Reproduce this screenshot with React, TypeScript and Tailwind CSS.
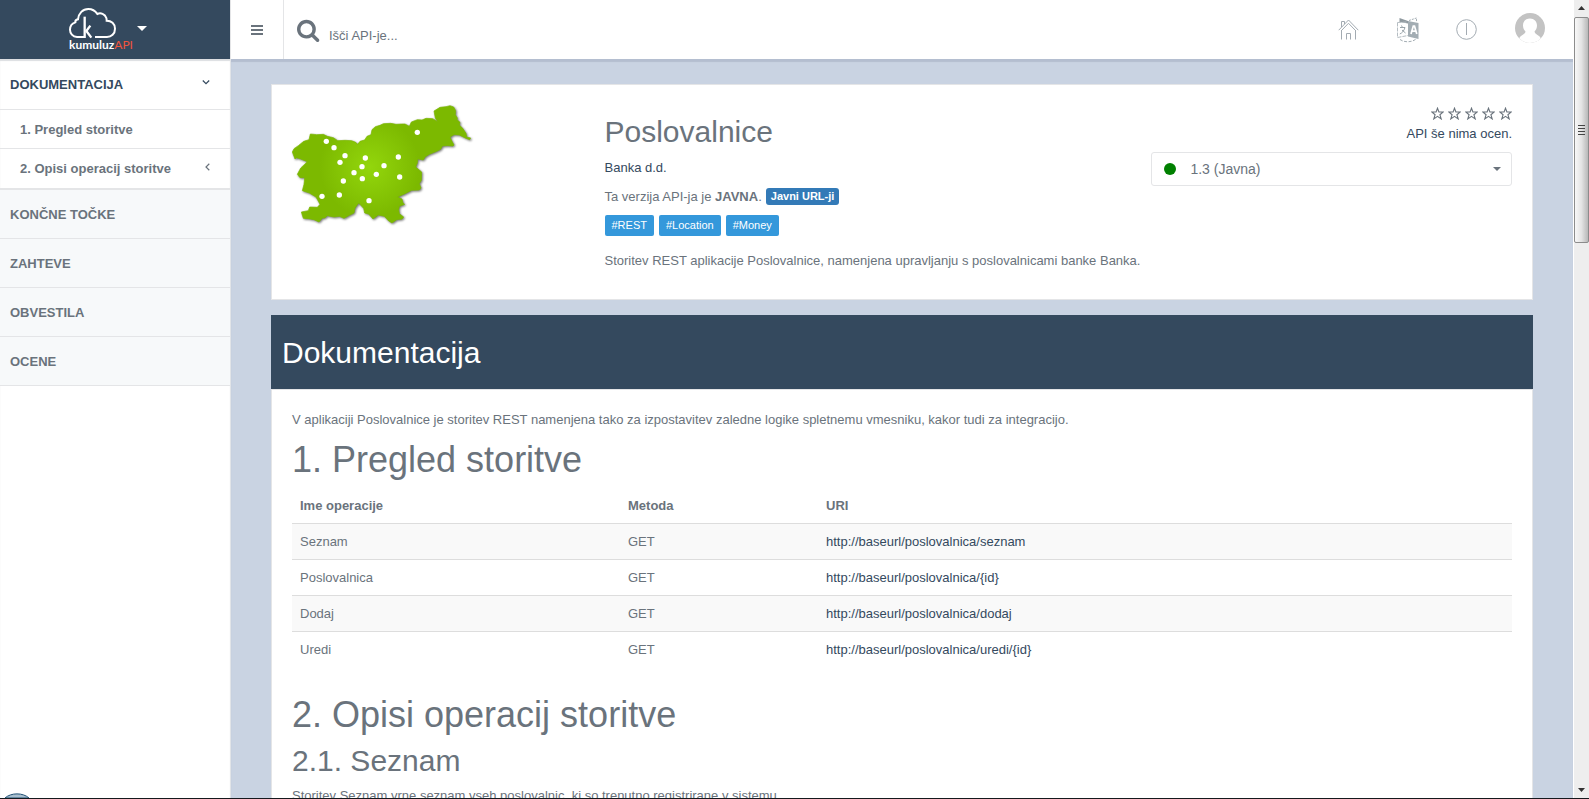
import React from "react";

const operations = [
  { name: "Seznam", method: "GET", uri: "http://baseurl/poslovalnica/seznam" },
  { name: "Poslovalnica", method: "GET", uri: "http://baseurl/poslovalnica/{id}" },
  { name: "Dodaj", method: "GET", uri: "http://baseurl/poslovalnica/dodaj" },
  { name: "Uredi", method: "GET", uri: "http://baseurl/poslovalnica/uredi/{id}" },
];

const sections = ["KONČNE TOČKE", "ZAHTEVE", "OBVESTILA", "OCENE"];
const tags = ["#REST", "#Location", "#Money"];

const branches = [
  [169, 183], [192, 202], [225, 226], [210, 246], [286, 233], [276, 259], [252, 277], [277, 295], [319, 282],
  [342, 256], [385, 230], [389, 290], [220, 302], [208, 344], [156, 348], [297, 361], [442, 156],
];

function Logo() {
  return (
    <span className="flex flex-col">
      <svg className="h-[31px] w-[47px]" viewBox="0 0 141 93" fill="none" stroke="#fff" strokeWidth="6">
        <path d="M47 87H24C11 86 3 76 3 65c0-12 7-19 16-22-1-5 3-8 8-9 2-18 14-31 31-31 12 0 21 6 27 15 10-5 23 0 27 12 1 3 1 5 1 8 14 0 25 9 25 24 0 16-11 25-24 25H78" />
        <path d="M47 26v64" strokeWidth="7" />
        <path d="M64 53 52 69l15 20" strokeWidth="7" />
      </svg>
      <span className="font-[Lato,sans-serif] text-xs leading-3 font-bold text-white">
        kumuluz<span className="font-normal text-[#f0543c]">API</span>
      </span>
    </span>
  );
}

function SloveniaMap() {
  return (
    <svg className="h-[120px] w-[180px] drop-shadow-[1px_1px_1px_rgba(0,0,0,0.55)]" viewBox="66 74 540 360" role="img" aria-label="Slovenija">
      <defs>
        <radialGradient id="land" gradientUnits="userSpaceOnUse" cx="300" cy="260" r="150">
          <stop offset="0" stopColor="#93d60c" />
          <stop offset="1" stopColor="#7cb900" />
        </radialGradient>
      </defs>
      <polygon
        fill="url(#land)"
        stroke="#7cb900"
        strokeWidth="2"
        strokeLinejoin="round"
        points="121,161 140,163 160,162 172,168 190,172 203,181 225,180 245,181 257,186 263,192 270,183 284,179 291,168 303,163 306,148 316,139 330,135 340,130 362,129 378,132 395,131 405,131 418,138 424,125 442,118 456,119 468,114 488,115 503,124 496,113 492,92 510,81 528,79 540,76 551,80 557,91 556,103 562,113 561,118 570,126 568,134 578,144 588,159 590,170 602,173 599,178 588,174 568,164 552,163 540,170 546,183 552,194 549,197 532,196 517,197 512,207 500,213 478,222 466,229 460,239 443,236 442,248 437,260 455,275 454,300 448,310 453,323 448,329 425,330 405,340 383,350 396,356 399,368 404,372 388,378 386,388 388,400 401,410 396,416 380,418 366,428 355,421 343,408 325,404 309,416 296,401 284,398 281,384 266,368 255,383 252,398 238,405 222,414 208,408 192,410 172,406 164,413 157,413 147,425 132,418 116,415 100,414 94,395 115,391 119,380 142,381 150,372 138,350 118,338 97,331 102,312 104,292 90,292 82,282 92,263 112,244 92,236 80,232 75,236 67,215 72,205 85,196 101,183 117,178"
      />
      {branches.map(([x, y]) => (
        <circle key={x + "-" + y} cx={x} cy={y} r="8" fill="#fff" />
      ))}
    </svg>
  );
}

function SearchIcon() {
  return (
    <svg className="size-6" viewBox="0 0 1792 1792" fill="#6a737c">
      <path d="M1152 832q0-185-131.5-316.5t-316.5-131.5-316.5 131.5-131.5 316.5 131.5 316.5 316.5 131.5 316.5-131.5 131.5-316.5zm512 832q0 52-38 90t-90 38q-54 0-90-38l-343-342q-179 124-399 124-143 0-273.5-55.5t-225-150-150-225-55.5-273.5 55.5-273.5 150-225 225-150 273.5-55.5 273.5 55.5 225 150 150 225 55.5 273.5q0 220-124 399l343 343q37 37 37 90z" />
    </svg>
  );
}

function HomeIcon() {
  return (
    <svg className="h-[21px] w-[21px]" viewBox="0 0 21 21" fill="none" stroke="#a3abb2">
      <path d="M.7 11.2 10.500 1l9.800 10.200M3.500 11.500 10.500 4.300l7 7.200M3.500 11v9.500M17.500 11v9.500M8.500 20.500v-6h4v6M3.500 8V2.500h3v2.600" />
    </svg>
  );
}

function TranslateIcon() {
  return (
    <svg className="h-[26px] w-[22px]" viewBox="0 0 22 26">
      <path d="M2.500 1 11 4v2.500L2.500 5z" fill="#8f999f" />
      <path d="M11 4l10.500 2v16L11 19.500z" fill="#a3adb3" />
      <path d="M12 3.500 19.500 1v4" fill="none" stroke="#a3adb3" strokeDasharray="2 1" />
      <path d="M.5 5.500v15L11 18.500M.5 5.500l10-.5" fill="none" stroke="#b5bdc2" strokeDasharray="4 1" />
      <path d="M3 10.500h5C7 14 5 16 2.800 17M4.500 8.500l1 2M5 13l3.500 3" fill="none" stroke="#9aa4aa" />
      <path d="M14 17l2.300-8h1.200l2.300 8M14.800 14.200h4.200" fill="none" stroke="#fff" strokeWidth="1.700" />
      <path d="M3 22.500c4 3 11 3 15.500 0" fill="none" stroke="#a3adb3" strokeDasharray="3 1.500" />
    </svg>
  );
}

function PowerIcon() {
  return (
    <svg className="h-[21px] w-[21px]" viewBox="0 0 21 21" fill="none" stroke="#a3abb2">
      <circle cx="10.500" cy="10.500" r="9.800" />
      <path d="M10.500 4v12" />
    </svg>
  );
}

function Avatar() {
  return (
    <svg className="size-[30px]" viewBox="0 0 30 30">
      <clipPath id="round">
        <circle cx="15" cy="15" r="15" />
      </clipPath>
      <g clipPath="url(#round)">
        <path fill="#c3c3c3" d="M0 0h30v30H0z" />
        <path fill="#fff" d="M15 5.500c4.200 0 7 3 7 7 0 2.500-1 4.500-2.500 6 .3 2.500 2.500 2.800 4.500 4.500 1.500 1.400 2.500 3 2.500 7h-23c0-4 1-5.600 2.500-7 2-1.700 4.200-2 4.500-4.500-1.500-1.500-2.500-3.500-2.500-6 0-4 2.800-7 7-7z" />
      </g>
    </svg>
  );
}

function Star() {
  return (
    <svg className="size-[13px]" viewBox="0 0 13 13" fill="none" stroke="#6a737c" strokeWidth="1.100">
      <path d="M6.500 1.200 7.900 5h4.300L8.900 7.700l1.300 4.200-3.700-2.500-3.700 2.500 1.300-4.200L.8 5h4.300z" />
    </svg>
  );
}

function Sidebar() {
  return (
    <nav className="w-[231px] shrink-0 border-r border-[#e1e4e8] bg-white text-[13px] font-bold shadow-[inset_0_2px_1px_#dcdee1]">
      <a href="#dokumentacija" className="flex h-[51px] items-center justify-between border-b border-[#e4e5e7] pr-5 pl-[10px] text-[#34495e]">
        DOKUMENTACIJA
        <svg className="mb-1 h-[5px] w-[8px]" viewBox="0 0 8 5" fill="none" stroke="#34495e" strokeWidth="1.200"><path d="M.8.5 4 3.700 7.200.5" /></svg>
      </a>
      <a href="#pregled" className="flex h-[39px] items-center border-b border-[#e4e5e7] pl-5">1. Pregled storitve</a>
      <a href="#opisi" className="flex h-[41px] items-center justify-between border-b-2 border-[#e4e5e7] pr-5 pl-5">
        2. Opisi operacij storitve
        <svg className="mb-1 h-[8px] w-[5px]" viewBox="0 0 5 8" fill="none" stroke="#6a737c" strokeWidth="1.200"><path d="M4.300.8 1 4l3.300 3.200" /></svg>
      </a>
      {sections.map((label) => (
        <a key={label} href="#" className="flex h-[49px] items-center border-b border-[#e4e5e7] bg-[#f7f9fa] pl-[10px]">{label}</a>
      ))}
    </nav>
  );
}

function Header() {
  return (
    <header className="flex h-[59px] shrink-0 bg-white">
      <button className="flex w-[230px] shrink-0 items-start gap-1 bg-[#34495e] pt-2 pl-[69px]" aria-label="kumuluzAPI">
        <Logo />
        <svg className="mt-[18px] h-[5px] w-[10px]" viewBox="0 0 10 5" fill="#fff"><path d="M0 0h10L5 5z" /></svg>
      </button>
      <button className="flex w-[54px] shrink-0 items-center justify-center border-r border-l border-[#e4e5e7]" aria-label="Meni">
        <svg className="h-[10px] w-3" viewBox="0 0 12 10" fill="#6a737c"><path d="M0 0h12v2H0zM0 4h12v2H0zM0 8h12v2H0z" /></svg>
      </button>
      <label className="flex flex-1 items-center gap-2 pl-[13px]">
        <SearchIcon />
        <input type="search" aria-label="Išči API-je" placeholder="Išči API-je..." className="mt-3 min-w-0 flex-1 outline-none placeholder:text-[#6a737c]" />
      </label>
      <div className="flex items-center pr-7">
        <a href="#" aria-label="Domov" className="flex w-[59px] justify-center"><HomeIcon /></a>
        <a href="#" aria-label="Jezik" className="flex w-[59px] justify-center"><TranslateIcon /></a>
        <a href="#" aria-label="Odjava" className="flex w-[59px] justify-center"><PowerIcon /></a>
        <a href="#" aria-label="Profil" className="ml-[19px] pb-1"><Avatar /></a>
      </div>
    </header>
  );
}

function ApiSummary() {
  return (
    <section className="border border-[#e4e5e7] bg-white p-5 pb-[29px]">
      <div className="-mx-[15px] grid grid-cols-[3fr_9fr]">
        <div className="px-[15px]"><SloveniaMap /></div>
        <div>
          <div className="grid grid-cols-[7fr_5fr]">
            <div className="px-[15px] pt-[10px]">
              <h1 className="text-[30px] leading-[33px]">Poslovalnice</h1>
              <p className="mt-[10px]"><a href="#" className="text-[#34495e]">Banka d.d.</a></p>
              <p className="mt-[10px] flex items-center whitespace-pre">
                Ta verzija API-ja je <strong>JAVNA</strong>.
                <button className="ml-1 h-[17px] rounded-[3px] bg-[#337ab7] px-[5px] text-[11px] leading-[17px] font-bold text-white">Javni URL-ji</button>
              </p>
              <div className="mt-[9px] flex gap-[5px]">
                {tags.map((tag) => (
                  <a key={tag} href="#" className="h-[21px] rounded-[2px] bg-[#3498db] px-[7px] text-[11px] leading-[21px] text-white">{tag}</a>
                ))}
              </div>
            </div>
            <div className="px-[15px]">
              <div className="mt-[2px] flex justify-end gap-1">
                {[1, 2, 3, 4, 5].map((n) => <Star key={n} />)}
              </div>
              <p className="mt-1 text-right text-[#34495e]">API še nima ocen.</p>
              <button className="mt-[9px] flex h-[34px] w-full items-center rounded-[3px] border border-[#e4e5e7] px-3 text-sm">
                <span className="mr-[14px] size-3 rounded-full bg-[#008000]" />
                1.3 (Javna)
                <svg className="mr-[-2px] ml-auto h-1 w-2" viewBox="0 0 8 4" fill="#6a737c"><path d="M0 0h8L4 4z" /></svg>
              </button>
            </div>
          </div>
          <p className="mt-[15px] px-[15px]">Storitev REST aplikacije Poslovalnice, namenjena upravljanju s poslovalnicami banke Banka.</p>
        </div>
      </div>
    </section>
  );
}

function Documentation() {
  return (
    <section id="dokumentacija" className="mt-[15px]">
      <h2 className="bg-[#34495e] px-[11px] pt-[21px] pb-5 text-[30px] leading-[33px] text-white">Dokumentacija</h2>
      <div className="border border-[#e4e5e7] bg-white p-5">
        <p>V aplikaciji Poslovalnice je storitev REST namenjena tako za izpostavitev zaledne logike spletnemu vmesniku, kakor tudi za integracijo.</p>
        <h1 id="pregled" className="mt-[11px] text-4xl">1. Pregled storitve</h1>
        <table className="mt-2 w-full table-fixed border-collapse text-left">
          <thead>
            <tr>
              <th className="w-[328px] p-2">Ime operacije</th>
              <th className="w-[198px] p-2">Metoda</th>
              <th className="p-2">URI</th>
            </tr>
          </thead>
          <tbody>
            {operations.map((op) => (
              <tr key={op.name} className="border-t border-[#ddd] odd:bg-[#f9f9f9]">
                <td className="p-2">{op.name}</td>
                <td className="p-2">{op.method}</td>
                <td className="p-2"><a href="#" className="text-[#34495e]">{op.uri}</a></td>
              </tr>
            ))}
          </tbody>
        </table>
        <h1 id="opisi" className="mt-7 text-4xl">2. Opisi operacij storitve</h1>
        <h2 className="mt-[9px] text-[30px] leading-[33px]">2.1. Seznam</h2>
        <p className="mt-[9px]">Storitev Seznam vrne seznam vseh poslovalnic, ki so trenutno registrirane v sistemu.</p>
      </div>
    </section>
  );
}

function ScrollRail() {
  return (
    <div aria-hidden="true" className="flex w-4 shrink-0 flex-col items-center border-l border-white bg-[#eeeeee]">
      <svg className="mt-[6px] mb-[7px] h-1 w-[7px] shrink-0" viewBox="0 0 7 4" fill="#333"><path d="M3.500 0 7 4H0z" /></svg>
      <div className="flex h-[226px] w-full shrink-0 flex-col items-center justify-center gap-[2px] rounded-[2px] border border-[#8c8c8c] bg-linear-to-r from-[#f8f8f8] via-[#e4e4e4] to-[#b8b8b8]">
        <span className="h-px w-[7px] bg-[#444]" />
        <span className="h-px w-[7px] bg-[#444]" />
        <span className="h-px w-[7px] bg-[#444]" />
        <span className="h-px w-[7px] bg-[#444]" />
      </div>
      <svg className="mt-auto mb-[6px] h-1 w-[7px] shrink-0" viewBox="0 0 7 4" fill="#333"><path d="M0 0h7L3.500 4z" /></svg>
    </div>
  );
}

export default function App() {
  return (
    <div className="relative flex h-screen flex-col overflow-hidden font-['Liberation_Sans',Arial,sans-serif] text-[13px] leading-[19px] text-[#6a737c]">
      <div className="flex min-h-0 flex-1">
        <div className="flex min-w-0 flex-1 flex-col">
          <Header />
          <div className="flex min-h-0 flex-1">
            <Sidebar />
            <main className="min-w-0 flex-1 overflow-hidden bg-[#c9d3e2] px-10 pt-[25px] shadow-[inset_0_3px_1px_#b4bed0]">
              <ApiSummary />
              <Documentation />
            </main>
          </div>
        </div>
        <ScrollRail />
      </div>
      <div className="h-px shrink-0 bg-[#15191d]" />
      <svg className="absolute bottom-px left-0 h-[5px] w-[34px]" viewBox="0 0 34 5" aria-hidden="true">
        <path d="M5 5C11-.5 23-.5 29 5z" fill="#a9bfce" stroke="#1f4f74" />
      </svg>
    </div>
  );
}
